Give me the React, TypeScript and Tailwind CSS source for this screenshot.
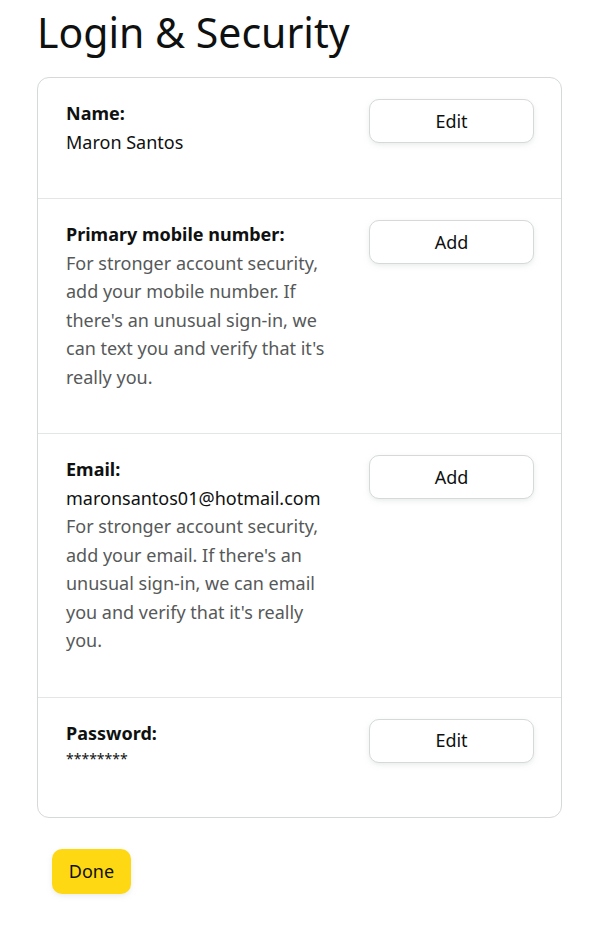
import React from "react";

const font = { fontFamily: "'Noto Sans', 'Open Sans', sans-serif" };

function Btn({ label }: { label: string }) {
  return (
    <button className="ml-auto w-[165px] h-[44px] shrink-0 rounded-[10px] border border-[#D5D9D9] bg-white text-[18px] text-[#0F1111] shadow-[0_2px_5px_0_rgba(213,217,217,0.5)]">
      {label}
    </button>
  );
}

function Row({
  label,
  children,
  btn,
  last,
}: {
  label: string;
  children: React.ReactNode;
  btn: string;
  last?: boolean;
}) {
  return (
    <div
      className={`flex pl-[28px] pr-[27px] pt-[21px] ${
        last ? "pb-[48px]" : "pb-[42px] border-b border-[#E3E6E6]"
      }`}
    >
      <div className="w-[270px] text-[18px] leading-[28.5px]">
        <div className="font-bold text-[#0F1111]">{label}</div>
        {children}
      </div>
      <Btn label={btn} />
    </div>
  );
}

export default function App() {
  return (
    <div className="min-h-[940px] bg-white" style={font}>
      <div className="pl-[37px] w-[562px]">
        <h1 className="pt-[8px] text-[41px] leading-[48px] font-normal text-[#0F1111]">
          Login &amp; Security
        </h1>
        <div className="mt-[21px] rounded-[12px] border border-[#D5D9D9]">
          <Row label="Name:" btn="Edit">
            <div className="text-[#0F1111]">Maron Santos</div>
          </Row>
          <Row label="Primary mobile number:" btn="Add">
            <div className="text-[#565959]">
              For stronger account security, add your mobile number. If there's an
              unusual sign-in, we can text you and verify that it's really you.
            </div>
          </Row>
          <Row label="Email:" btn="Add">
            <div className="text-[#0F1111]">maronsantos01@hotmail.com</div>
            <div className="text-[#565959]">
              For stronger account security, add your email. If there's an unusual
              sign-in, we can email you and verify that it's really you.
            </div>
          </Row>
          <Row label="Password:" btn="Edit" last>
            <div className="text-[14px] leading-[20px] mt-[2px] text-[#0F1111]">********</div>
          </Row>
        </div>
        <button className="mt-[31px] ml-[15px] w-[79px] h-[45px] rounded-[10px] bg-[#FFD814] text-[18px] text-[#0F1111] shadow-[0_2px_5px_0_rgba(213,217,217,0.5)]">
          Done
        </button>
      </div>
    </div>
  );
}
